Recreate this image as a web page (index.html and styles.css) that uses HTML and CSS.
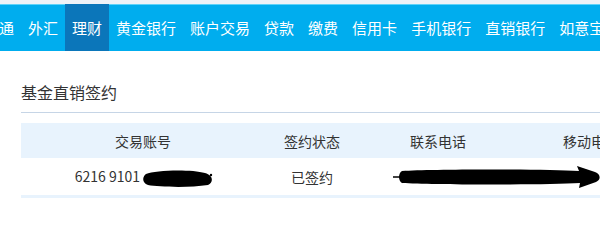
FILE: index.html
```html
<!DOCTYPE html>
<html lang="zh-CN">
<head>
<meta charset="utf-8">
<title>基金直销签约</title>
<link rel="stylesheet" href="styles.css">
</head>
<body>
<div class="topstrip"></div>
<nav class="nav">
  <a class="nav-item first">一卡通</a>
  <a class="nav-item">外汇</a>
  <a class="nav-item active">理财</a>
  <a class="nav-item">黄金银行</a>
  <a class="nav-item">账户交易</a>
  <a class="nav-item">贷款</a>
  <a class="nav-item">缴费</a>
  <a class="nav-item">信用卡</a>
  <a class="nav-item">手机银行</a>
  <a class="nav-item">直销银行</a>
  <a class="nav-item">如意宝</a>
</nav>
<main class="content">
  <h1 class="title">基金直销签约</h1>
  <table class="grid">
    <colgroup>
      <col class="c1"><col class="c2"><col class="c3"><col class="c4">
    </colgroup>
    <thead>
      <tr><th>交易账号</th><th>签约状态</th><th>联系电话</th><th>移动电话</th></tr>
    </thead>
    <tbody>
      <tr>
        <td class="acct">6216 9101 <svg class="redact1" width="70" height="17" viewBox="0 0 70 17"><path d="M3 4 C12 0 48 -1 62 3 C70 5 71 12 65 15 C46 18 16 17 5 15 C-1 13 -1 7 3 4 Z" fill="#000"/><circle cx="68" cy="5" r="1.2" fill="#000"/></svg></td>
        <td>已签约</td>
        <td class="phone"><svg class="redact2" width="207" height="22" viewBox="0 0 207 22"><path d="M0 11 H10" stroke="#000" stroke-width="1.5"/><path d="M9 5 C40 3 150 3 186 5 L184 0 L202 6 C208 8 208 14 203 16 L186 22 L187 17 C150 19 40 19 9 17 C5 15 5 7 9 5 Z" fill="#000"/></svg></td>
        <td></td>
      </tr>
    </tbody>
  </table>
</main>
</body>
</html>
```

FILE: styles.css
```css
html, body {
  margin: 0;
  padding: 0;
  background: #ffffff;
  overflow: hidden;
  font-family: "Noto Sans CJK SC", "Noto Sans", sans-serif;
  color: #333333;
}

.topstrip {
  height: 4px;
  background: #eef2f7;
}

.nav {
  display: flex;
  height: 47px;
  background: #00adee;
  box-shadow: inset 0 1px 0 #5fd2f8;
  white-space: nowrap;
  margin-left: -38px;
}

.nav-item {
  display: flex;
  align-items: center;
  padding: 0 7px;
  font-size: 15px;
  color: #ffffff;
  flex: none;
}

.nav-item.active {
  background: #0b76ba;
}

.content {
  padding: 29px 0 0 21px;
}

.title {
  margin: 0;
  font-size: 16px;
  font-weight: normal;
  line-height: 24px;
  padding-bottom: 8px;
  border-bottom: 1px solid #c6d5e6;
  color: #333333;
}

.grid {
  margin-top: 10px;
  border-collapse: collapse;
  table-layout: fixed;
  width: 644px;
  font-size: 14px;
}

.c1 { width: 244px; }
.c2 { width: 94px; }
.c3 { width: 158px; }
.c4 { width: 148px; }

.grid th {
  height: 35px;
  padding: 0;
  background: #e8f3fd;
  font-weight: normal;
  text-align: center;
  color: #333333;
  white-space: nowrap;
}

.grid td {
  height: 37px;
  padding: 0;
  text-align: center;
  border-bottom: 3px solid #e8f3fd;
  white-space: nowrap;
}

.grid td.acct {
  padding-left: 2px;
}

.grid td.phone {
  text-align: left;
  padding-left: 34px;
  overflow: visible;
}

.redact1, .redact2 {
  vertical-align: middle;
}

.redact2 {
  position: relative;
  z-index: 1;
}
```
